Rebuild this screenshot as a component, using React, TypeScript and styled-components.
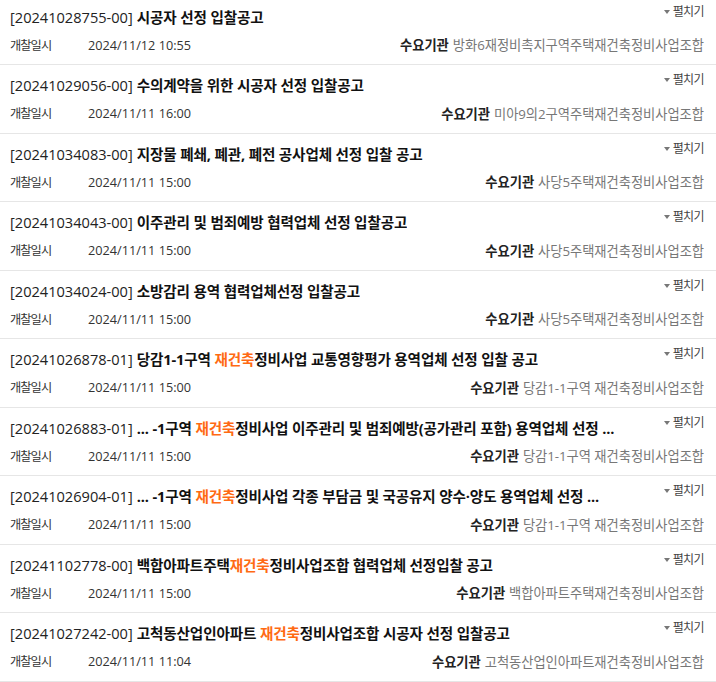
import React from "react";
import styled, { createGlobalStyle } from "styled-components";

const GlobalStyle = createGlobalStyle`
  html, body {
    margin: 0;
    padding: 0;
    background: #ffffff;
    overflow: hidden;
  }
  body {
    font-family: "Open Sans", "Noto Sans CJK KR", sans-serif;
    color: #222;
  }
`;

interface Notice {
  code: string;
  title: (string | { hl: string })[];
  date: string;
  agency: string;
}

const notices: Notice[] = [
  {
    code: "20241028755-00",
    title: ["시공자 선정 입찰공고"],
    date: "2024/11/12 10:55",
    agency: "방화6재정비촉지구역주택재건축정비사업조합",
  },
  {
    code: "20241029056-00",
    title: ["수의계약을 위한 시공자 선정 입찰공고"],
    date: "2024/11/11 16:00",
    agency: "미아9의2구역주택재건축정비사업조합",
  },
  {
    code: "20241034083-00",
    title: ["지장물 폐쇄, 폐관, 폐전 공사업체 선정 입찰 공고"],
    date: "2024/11/11 15:00",
    agency: "사당5주택재건축정비사업조합",
  },
  {
    code: "20241034043-00",
    title: ["이주관리 및 범죄예방 협력업체 선정 입찰공고"],
    date: "2024/11/11 15:00",
    agency: "사당5주택재건축정비사업조합",
  },
  {
    code: "20241034024-00",
    title: ["소방감리 용역 협력업체선정 입찰공고"],
    date: "2024/11/11 15:00",
    agency: "사당5주택재건축정비사업조합",
  },
  {
    code: "20241026878-01",
    title: ["당감1-1구역 ", { hl: "재건축" }, "정비사업 교통영향평가 용역업체 선정 입찰 공고"],
    date: "2024/11/11 15:00",
    agency: "당감1-1구역 재건축정비사업조합",
  },
  {
    code: "20241026883-01",
    title: ["... -1구역 ", { hl: "재건축" }, "정비사업 이주관리 및 범죄예방(공가관리 포함) 용역업체 선정 ..."],
    date: "2024/11/11 15:00",
    agency: "당감1-1구역 재건축정비사업조합",
  },
  {
    code: "20241026904-01",
    title: ["... -1구역 ", { hl: "재건축" }, "정비사업 각종 부담금 및 국공유지 양수·양도 용역업체 선정 ..."],
    date: "2024/11/11 15:00",
    agency: "당감1-1구역 재건축정비사업조합",
  },
  {
    code: "20241102778-00",
    title: ["백합아파트주택", { hl: "재건축" }, "정비사업조합 협력업체 선정입찰 공고"],
    date: "2024/11/11 15:00",
    agency: "백합아파트주택재건축정비사업조합",
  },
  {
    code: "20241027242-00",
    title: ["고척동산업인아파트 ", { hl: "재건축" }, "정비사업조합 시공자 선정 입찰공고"],
    date: "2024/11/11 11:04",
    agency: "고척동산업인아파트재건축정비사업조합",
  },
];

const List = styled.ul`
  list-style: none;
  margin: -3.5px 0 0;
  padding: 0;
`;

const Item = styled.li`
  height: 67.5px;
  box-sizing: content-box;
  border-bottom: 1px solid #e6e6e6;
  padding: 0 12px 0 10px;
  display: flex;
  flex-direction: column;
`;

const TopLine = styled.div`
  display: flex;
  justify-content: space-between;
  align-items: flex-start;
  padding-top: 9px;
  height: 22px;
`;

const Title = styled.div`
  font-size: 14.6px;
  line-height: 22px;
  font-weight: 700;
  color: #111;
  white-space: nowrap;
  overflow: hidden;
  letter-spacing: -0.15px;
`;

const Code = styled.span`
  font-weight: 400;
  letter-spacing: 0;
  color: #222;
  margin-right: 4px;
`;

const Highlight = styled.span`
  color: #ff6a13;
`;

const Toggle = styled.div`
  display: flex;
  align-items: center;
  gap: 3px;
  font-size: 12px;
  line-height: 14px;
  color: #444;
  letter-spacing: -0.6px;
  margin-top: -1px;
  flex-shrink: 0;
`;

const Caret = styled.span`
  width: 0;
  height: 0;
  border-left: 3.5px solid transparent;
  border-right: 3.5px solid transparent;
  border-top: 4px solid #777;
`;

const BottomLine = styled.div`
  display: flex;
  justify-content: space-between;
  align-items: center;
  margin-top: 8px;
  height: 18px;
`;

const Meta = styled.div`
  display: flex;
  align-items: center;
  font-size: 12.7px;
  color: #333;
`;

const MetaLabel = styled.span`
  width: 78px;
  font-size: 12.2px;
  letter-spacing: -0.9px;
  color: #333;
`;

const Agency = styled.div`
  font-size: 13.3px;
  letter-spacing: -0.05px;
  color: #777;
  white-space: nowrap;
`;

const AgencyLabel = styled.span`
  font-weight: 700;
  color: #222;
  margin-right: 4px;
`;

export default function App() {
  return (
    <>
      <GlobalStyle />
      <List>
        {notices.map((n) => (
          <Item key={n.code}>
            <TopLine>
              <Title>
                <Code>[{n.code}]</Code>
                {n.title.map((part, i) =>
                  typeof part === "string" ? (
                    <React.Fragment key={i}>{part}</React.Fragment>
                  ) : (
                    <Highlight key={i}>{part.hl}</Highlight>
                  )
                )}
              </Title>
              <Toggle>
                <Caret />
                펼치기
              </Toggle>
            </TopLine>
            <BottomLine>
              <Meta>
                <MetaLabel>개찰일시</MetaLabel>
                {n.date}
              </Meta>
              <Agency>
                <AgencyLabel>수요기관</AgencyLabel>
                {n.agency}
              </Agency>
            </BottomLine>
          </Item>
        ))}
      </List>
    </>
  );
}
